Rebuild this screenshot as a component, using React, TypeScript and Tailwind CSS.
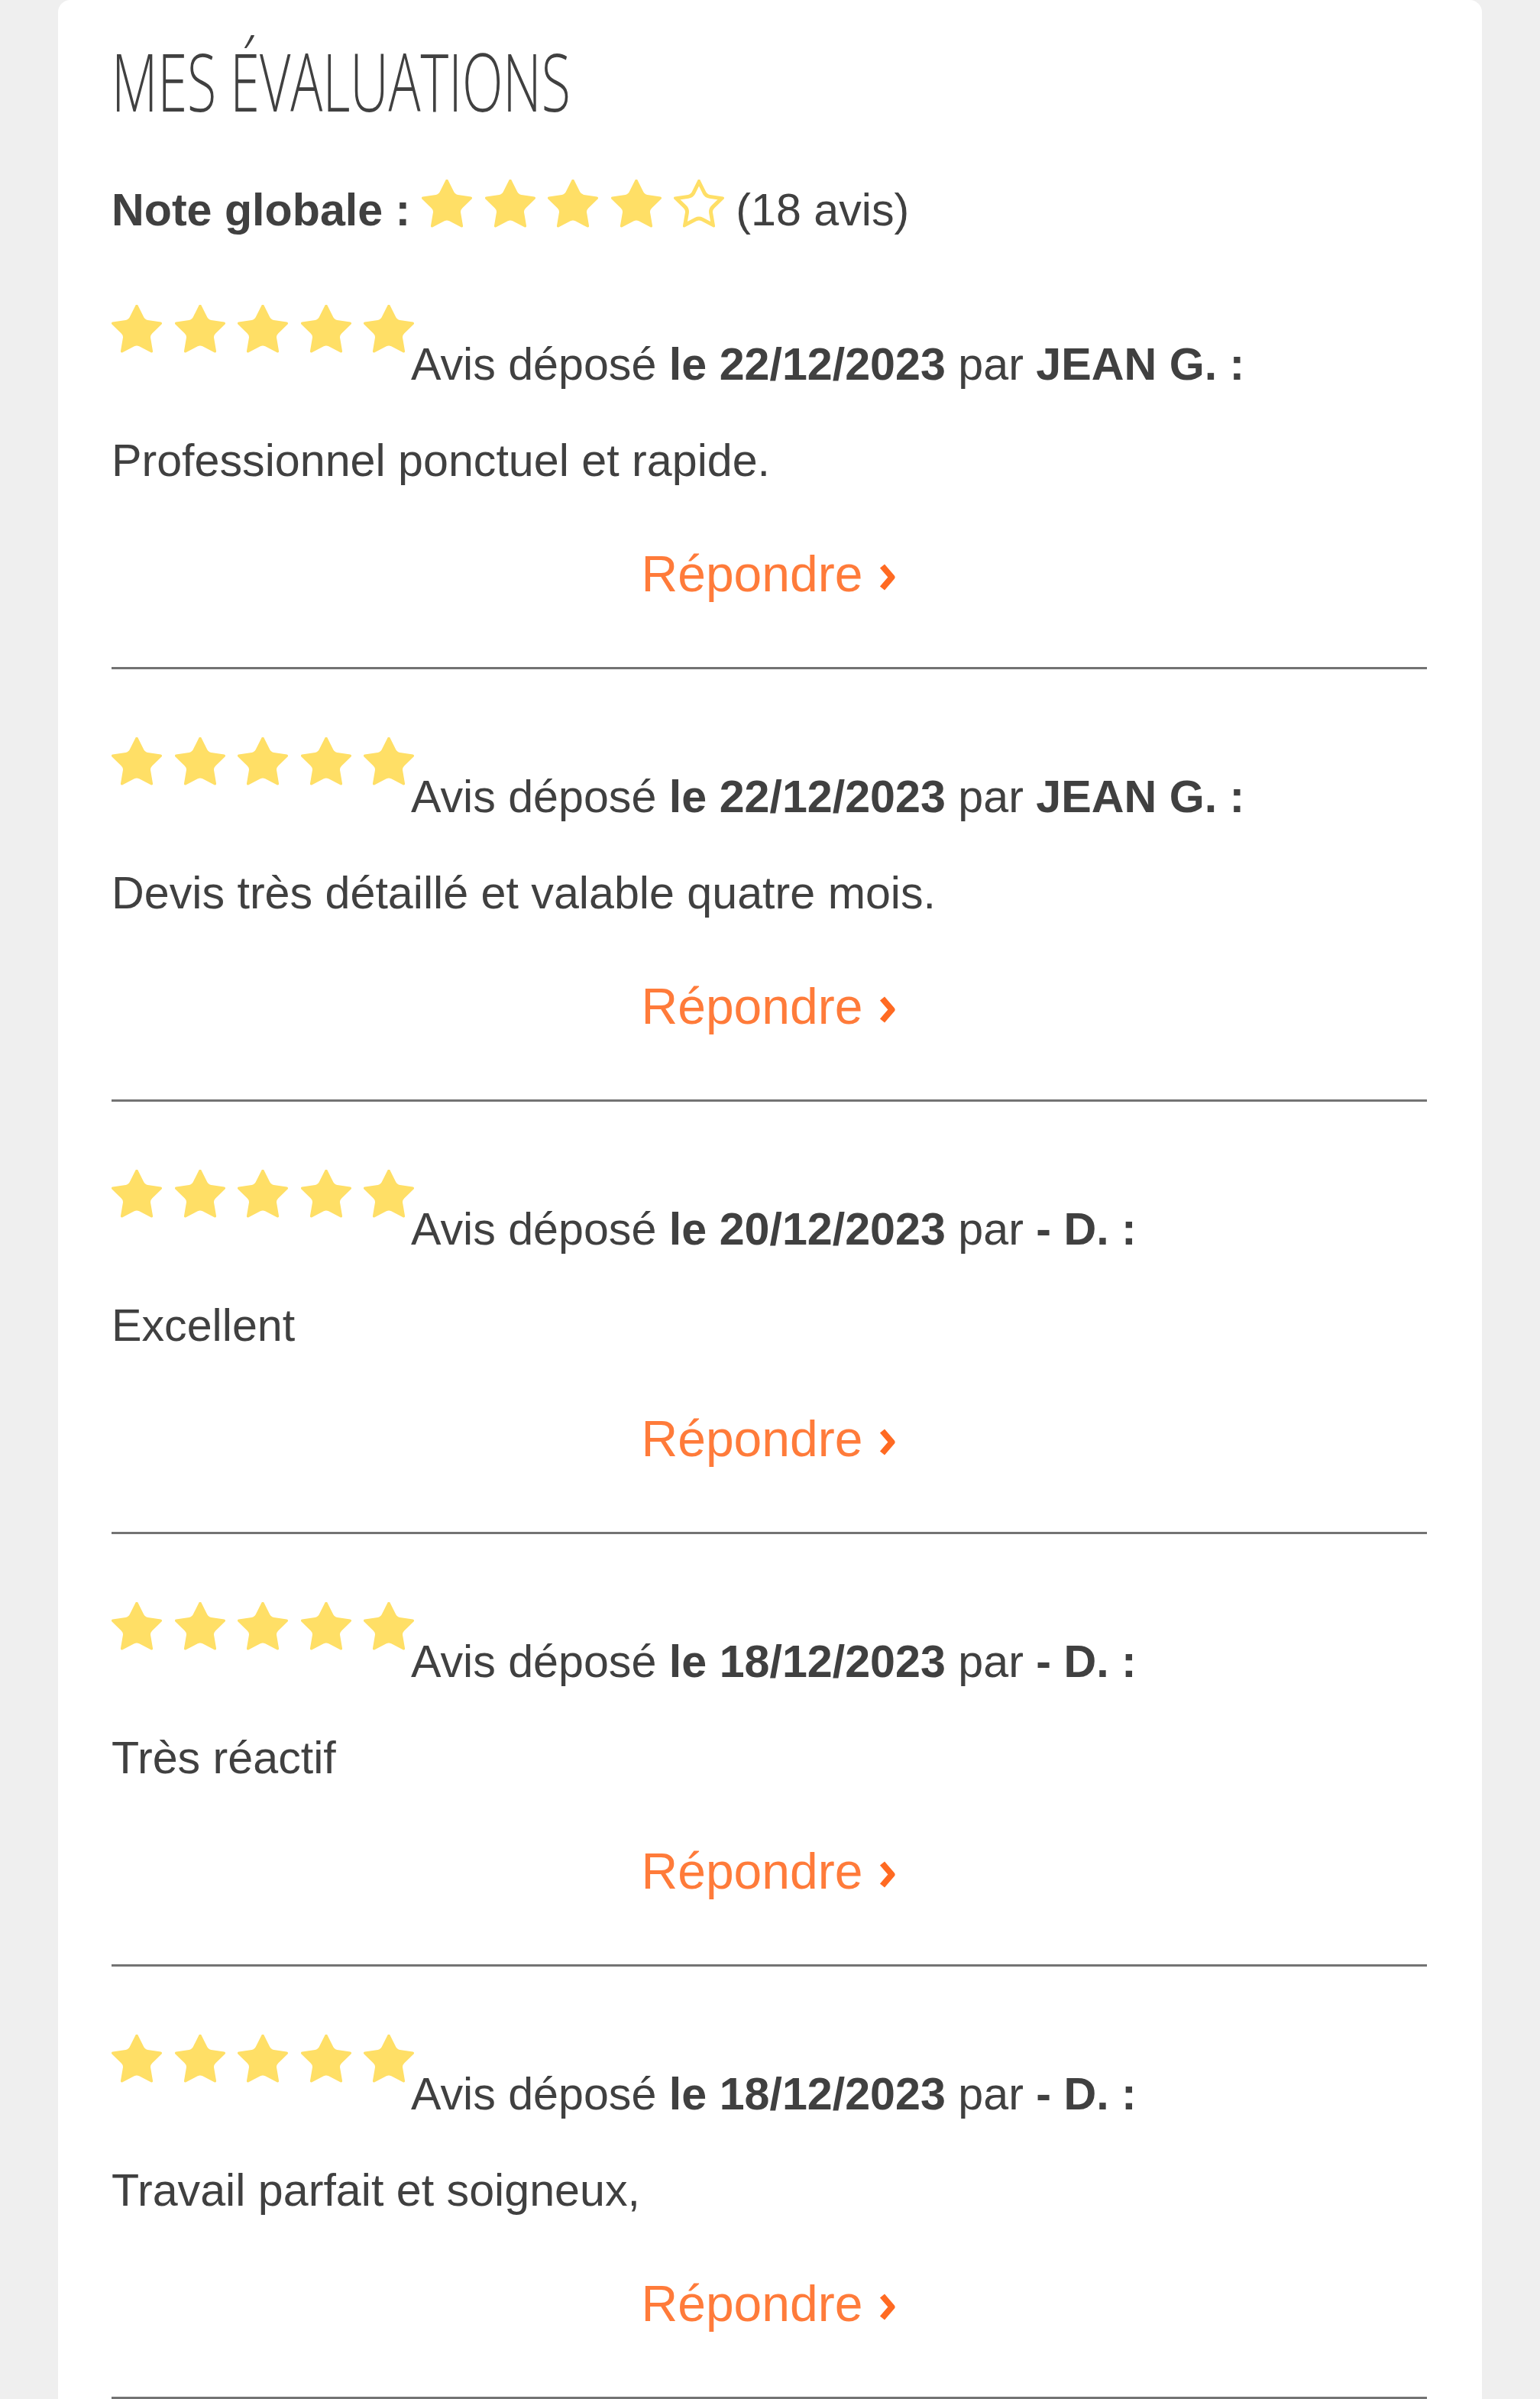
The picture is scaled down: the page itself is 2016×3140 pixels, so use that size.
import { useId } from "react";

const reviews = [
  { date: "22/12/2023", author: "JEAN G.", text: "Professionnel ponctuel et rapide." },
  { date: "22/12/2023", author: "JEAN G.", text: "Devis très détaillé et valable quatre mois." },
  { date: "20/12/2023", author: "- D.", text: "Excellent" },
  { date: "18/12/2023", author: "- D.", text: "Très réactif" },
  { date: "18/12/2023", author: "- D.", text: "Travail parfait et soigneux," },
];

const STAR =
  "M11.525 2.295a.53.53 0 0 1 .95 0l2.31 4.679a2.123 2.123 0 0 0 1.595 1.16l5.166.756a.53.53 0 0 1 .294.904l-3.736 3.638a2.123 2.123 0 0 0-.611 1.878l.882 5.14a.53.53 0 0 1-.771.56l-4.618-2.428a2.122 2.122 0 0 0-1.973 0L6.396 21.01a.53.53 0 0 1-.77-.56l.881-5.139a2.122 2.122 0 0 0-.611-1.879L2.16 9.795a.53.53 0 0 1 .294-.906l5.165-.755a2.122 2.122 0 0 0 1.597-1.16z";

function Star({ empty = false }: { empty?: boolean }) {
  const id = useId();
  return (
    <svg width="66" height="63" viewBox="2 2.1 20 19.1" preserveAspectRatio="none" className="shrink-0">
      {empty ? (
        <>
          <defs>
            <clipPath id={id}>
              <path d={STAR} />
            </clipPath>
          </defs>
          <path d={STAR} fill="none" stroke="#ffdf66" strokeWidth="3" clipPath={`url(#${id})`} />
        </>
      ) : (
        <path d={STAR} fill="#ffdf66" />
      )}
    </svg>
  );
}

function Stars({ count = 5 }: { count?: number }) {
  return (
    <div className="flex shrink-0 gap-[16.5px]">
      {[0, 1, 2, 3, 4].map((i) => (
        <Star key={i} empty={i >= count} />
      ))}
    </div>
  );
}

function Review({ date, author, text, first }: { date: string; author: string; text: string; first?: boolean }) {
  return (
    <div className={first ? "pt-[91px]" : "pt-[89px]"}>
      <div className="flex items-start">
        <Stars />
        <p className="mt-[45px] ml-[-4px] whitespace-nowrap text-[59.2px] leading-[66px]">
          Avis déposé <b>le {date}</b> par <b>{author} :</b>
        </p>
      </div>
      <p className="mt-[60px] text-[59.2px] leading-[66px]">{text}</p>
      <div className="mt-[79px] text-center text-[66px] leading-[72px] text-[#ff7b3a]">
        Répondre
        <svg width="24" height="37" viewBox="0 0 24 37" className="ml-[21px] inline-block align-baseline">
          <path d="M5 4 L17.5 18.5 L5 33" fill="none" stroke="#ff6a22" strokeWidth="8" strokeLinejoin="round" />
        </svg>
      </div>
      <div className="mt-[86px] h-[3px] bg-[#737373]" />
    </div>
  );
}

export default function App() {
  return (
    <div className="min-h-screen bg-[#efefef] px-[76px] font-['Liberation_Sans',Arial,sans-serif] text-[#404040]">
      <div className="rounded-t-[16px] bg-white pl-[70px] pr-[72px] pt-[52px] pb-[80px]">
        <h1 className="inline-block origin-left scale-x-[0.66] whitespace-nowrap font-['Open_Sans',sans-serif] text-[106px] font-light leading-[106px]">
          MES ÉVALUATIONS
        </h1>
        <div className="mt-[77px] flex items-start gap-[15px]">
          <span className="mt-[7px] text-[59.2px] font-bold leading-[66px]">Note globale :</span>
          <Stars count={4} />
          <span className="mt-[7px] text-[59.2px] leading-[66px]">(18 avis)</span>
        </div>
        {reviews.map((r, i) => (
          <Review key={i} {...r} first={i === 0} />
        ))}
      </div>
    </div>
  );
}
